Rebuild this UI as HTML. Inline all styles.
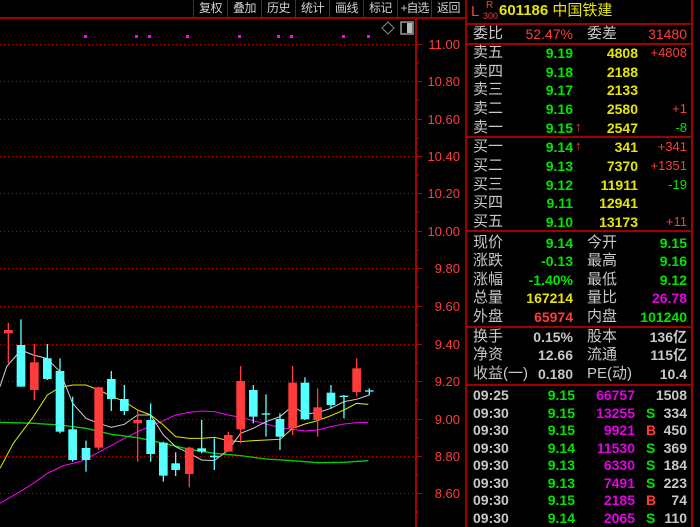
<!DOCTYPE html>
<html><head><meta charset="utf-8"><style>
*{margin:0;padding:0}
body{width:700px;height:527px;background:#000;overflow:hidden;position:relative;font-family:"Liberation Sans","Noto Sans CJK SC",sans-serif}
.t{position:absolute;white-space:nowrap;line-height:18px}
.l{color:#c8c8c8;font-size:15px}
.r{text-align:right;font-size:14px;font-weight:bold}
.g{color:#00e600}.y{color:#e6e600}.rd{color:#ff3b3b}.m{color:#e600e6}.w{color:#c8c8c8}
.tb{position:absolute;top:0;height:18px;border-left:1px solid #b00;color:#d0d0d0;font-size:12px;line-height:17px;text-align:center;width:33px;white-space:nowrap;overflow:hidden;letter-spacing:-0.5px}
.hl{position:absolute;height:2px;background:#a00000}
</style></head><body>
<svg width="700" height="527" style="position:absolute;left:0;top:0">
<rect x="0" y="17" width="466" height="2" fill="#a00000"/>
<rect x="415" y="18" width="2" height="509" fill="#a00000"/>
<rect x="465" y="0" width="2" height="527" fill="#a00000"/>
<rect x="691" y="0" width="2" height="527" fill="#a00000"/>
<g fill="#ff00ff"><rect x="84" y="35" width="3" height="3"/><rect x="135" y="35" width="3" height="3"/><rect x="148" y="35" width="3" height="3"/><rect x="186" y="35" width="3" height="3"/><rect x="238" y="35" width="3" height="3"/><rect x="277" y="35" width="3" height="3"/><rect x="290" y="35" width="3" height="3"/><rect x="342" y="35" width="3" height="3"/><rect x="367" y="35" width="3" height="3"/></g>
<path d="M388 22 l6 6 l-6 6 l-6 -6z" fill="none" stroke="#888" stroke-width="1"/>
<rect x="401" y="22" width="12" height="12" fill="none" stroke="#999" stroke-width="1.5"/><rect x="407" y="23" width="5" height="10" fill="#bbb"/>
<g stroke="#c00000" stroke-dasharray="1 3" stroke-width="1">
<line x1="0" y1="44.5" x2="413" y2="44.5"/><line x1="0" y1="81.5" x2="413" y2="81.5"/><line x1="0" y1="119.5" x2="413" y2="119.5"/><line x1="0" y1="156.5" x2="413" y2="156.5"/><line x1="0" y1="193.5" x2="413" y2="193.5"/><line x1="0" y1="231.5" x2="413" y2="231.5"/><line x1="0" y1="268.5" x2="413" y2="268.5"/><line x1="0" y1="306.5" x2="413" y2="306.5"/><line x1="0" y1="344.5" x2="413" y2="344.5"/><line x1="0" y1="381.5" x2="413" y2="381.5"/><line x1="0" y1="419.5" x2="413" y2="419.5"/><line x1="0" y1="456.5" x2="413" y2="456.5"/><line x1="0" y1="493.5" x2="413" y2="493.5"/>
</g>
<g stroke="#c00000" stroke-width="1">
<line x1="416" y1="44.5" x2="422" y2="44.5"/><line x1="416" y1="81.5" x2="422" y2="81.5"/><line x1="416" y1="119.5" x2="422" y2="119.5"/><line x1="416" y1="156.5" x2="422" y2="156.5"/><line x1="416" y1="193.5" x2="422" y2="193.5"/><line x1="416" y1="231.5" x2="422" y2="231.5"/><line x1="416" y1="268.5" x2="422" y2="268.5"/><line x1="416" y1="306.5" x2="422" y2="306.5"/><line x1="416" y1="344.5" x2="422" y2="344.5"/><line x1="416" y1="381.5" x2="422" y2="381.5"/><line x1="416" y1="419.5" x2="422" y2="419.5"/><line x1="416" y1="456.5" x2="422" y2="456.5"/><line x1="416" y1="493.5" x2="422" y2="493.5"/>
<line x1="416" y1="63" x2="419" y2="63"/><line x1="416" y1="100" x2="419" y2="100"/><line x1="416" y1="138" x2="419" y2="138"/><line x1="416" y1="175" x2="419" y2="175"/><line x1="416" y1="212" x2="419" y2="212"/><line x1="416" y1="250" x2="419" y2="250"/><line x1="416" y1="287" x2="419" y2="287"/><line x1="416" y1="325" x2="419" y2="325"/><line x1="416" y1="363" x2="419" y2="363"/><line x1="416" y1="400" x2="419" y2="400"/><line x1="416" y1="438" x2="419" y2="438"/><line x1="416" y1="475" x2="419" y2="475"/><line x1="416" y1="512" x2="419" y2="512"/>
</g>
<g fill="#ff3b3b" font-size="13" text-anchor="end" font-family="Liberation Sans">
<text x="460" y="49">11.00</text><text x="460" y="86">10.80</text><text x="460" y="124">10.60</text><text x="460" y="161">10.40</text><text x="460" y="198">10.20</text><text x="460" y="236">10.00</text><text x="460" y="273">9.80</text><text x="460" y="311">9.60</text><text x="460" y="349">9.40</text><text x="460" y="386">9.20</text><text x="460" y="424">9.00</text><text x="460" y="461">8.80</text><text x="460" y="498">8.60</text>
</g>
<g transform="translate(0,300) scale(0.3333)">
<g stroke-width="3" fill="none">
<polyline stroke="#ff00ff" points="0,610 60,575 100,550 142,520 190,497 240,485 300,455 373,415 413,395 452,378 490,362 527,345 568,337 605,333 643,335 685,345 722,352 760,362 798,372 840,383 878,388 915,393 953,390 993,380 1032,372 1070,368 1105,368"/>
<polyline stroke="#00d000" stroke-width="4" points="0,367 100,370 180,375 258,385 334,403 413,413 490,430 568,448 643,460 722,467 798,477 878,482 953,488 1032,487 1105,482"/>
<polyline stroke="#e6e600" points="0,505 40,430 100,350 142,285 180,262 218,255 258,255 296,270 334,288 373,305 413,330 452,345 490,375 527,410 568,415 605,415 643,412 685,422 722,425 760,422 798,420 840,418 878,385 915,372 953,362 993,347 1032,330 1070,310 1105,313"/>
<polyline stroke="#d0d0d0" points="0,260 20,200 63,150 100,165 140,175 180,215 218,310 258,355 296,370 334,382 373,373 413,345 452,345 490,405 527,440 568,460 605,480 643,482 685,450 722,400 760,385 798,365 840,350 878,318 915,342 953,338 993,325 1032,305 1070,298 1108,285"/>
</g>
<g id="c" stroke-width="4"></g>
</g>
</svg>
<script>
var d=[[25,68,190,90,100,1],[63,58,260,135,260,0],[103,132,300,187,270,1],[142,132,240,175,237,0],[180,175,400,213,395,0],[218,290,485,388,480,0],[258,422,515,444,480,0],[296,260,450,262,443,1],[334,213,333,237,297,0],[373,255,345,297,333,0],[413,330,485,360,370,1],[452,310,485,360,462,0],[490,425,545,428,527,0],[527,457,528,490,510,0],[568,440,562,443,522,1],[605,360,460,445,455,0],[643,415,510,467,472,0],[685,395,455,405,455,1],[722,198,430,243,388,1],[760,255,370,270,350,0],[798,283,410,340,344,0],[840,340,450,357,410,0],[878,198,405,248,385,1],[915,232,360,248,358,0],[953,265,410,322,360,1],[993,255,325,278,315,0],[1032,285,355,287,291,0],[1070,175,290,205,276,1],[1108,265,285,271,275,0]];
var s='';d.forEach(function(a){var c=a[5]?'#ff3b3b':'#55ffff';s+='<line x1="'+a[0]+'" y1="'+a[1]+'" x2="'+a[0]+'" y2="'+a[2]+'" stroke="'+c+'"/>';s+='<rect x="'+(a[0]-13)+'" y="'+a[3]+'" width="26" height="'+Math.max(4,a[4]-a[3])+'" fill="'+c+'"/>';});
document.getElementById('c').innerHTML=s;
</script>
<div class="tb" style="left:193px">复权</div><div class="tb" style="left:227px">叠加</div><div class="tb" style="left:261px">历史</div><div class="tb" style="left:295px">统计</div><div class="tb" style="left:329px">画线</div><div class="tb" style="left:363px">标记</div><div class="tb" style="left:397px;letter-spacing:-1px">+自选</div><div class="tb" style="left:431px">返回</div>
<div class="hl" style="left:466px;width:226px;top:23px"></div>
<div class="hl" style="left:466px;width:226px;top:43px"></div>
<div class="hl" style="left:466px;width:226px;top:136px"></div>
<div class="hl" style="left:466px;width:226px;top:230px"></div>
<div class="hl" style="left:466px;width:226px;top:326px"></div>
<div class="hl" style="left:466px;width:226px;top:384px"></div>
<div class="t rd" style="left:471px;top:3px;font-size:15px">L</div>
<div class="t rd" style="left:486px;top:-3px;font-size:10px">R</div>
<div class="t rd" style="left:483px;top:7px;font-size:9px">300</div>
<div class="t y" style="left:499px;top:2px;font-size:15px;font-weight:bold">601186 <span style="font-weight:normal">中国铁建</span></div>
<div class="t l" style="left:473px;top:25px">委比</div>
<div class="t r rd" style="left:500px;width:73px;top:25px;font-weight:normal">52.47%</div>
<div class="t l" style="left:587px;top:25px">委差</div>
<div class="t r rd" style="left:620px;width:67px;top:25px;font-weight:normal">31480</div>
<div id="ob"></div>
<script>
var rows=[['卖五','9.19','4808','+4808','rd',53],['卖四','9.18','2188','','',72],['卖三','9.17','2133','','',90],['卖二','9.16','2580','+1','rd',109],['卖一','9.15','2547','-8','g',128],['买一','9.14','341','+341','rd',147],['买二','9.13','7370','+1351','rd',166],['买三','9.12','11911','-19','g',185],['买四','9.11','12941','','',203],['买五','9.10','13173','+11','rd',222]];
var h='';rows.forEach(function(r,i){var t=r[5]-9;h+='<div class="t l" style="left:473px;top:'+t+'px">'+r[0]+'</div><div class="t r g" style="left:520px;width:53px;top:'+t+'px">'+r[1]+'</div><div class="t r y" style="left:590px;width:48px;top:'+t+'px">'+r[2]+'</div><div class="t r '+r[4]+'" style="left:640px;width:47px;top:'+t+'px;font-weight:normal;font-size:13px">'+r[3]+'</div>';if(i==4||i==5)h+='<div class="t rd" style="left:575px;top:'+(t-1)+'px;font-size:13px;font-weight:bold">↑</div>';});
var q=[['现价','9.14','g','今开','9.15','g',243],['涨跌','-0.13','g','最高','9.16','g',261],['涨幅','-1.40%','g','最低','9.12','g',280],['总量','167214','y','量比','26.78','m',298],['外盘','65974','rd','内盘','101240','g',317],['换手','0.15%','w','股本','136亿','w',337],['净资','12.66','w','流通','115亿','w',355],['收益(一)','0.180','w','PE(动)','10.4','w',374]];
q.forEach(function(r){var t=r[6]-9;h+='<div class="t l" style="left:473px;top:'+t+'px">'+r[0]+'</div><div class="t r '+r[2]+'" style="left:510px;width:63px;top:'+t+'px">'+r[1]+'</div><div class="t l" style="left:587px;top:'+t+'px">'+r[3]+'</div><div class="t r '+r[5]+'" style="left:620px;width:67px;top:'+t+'px">'+r[4]+'</div>';});
var k=[['09:25','9.15','66757','','','1508'],['09:30','9.15','13255','S','g','334'],['09:30','9.15','9921','B','rd','450'],['09:30','9.14','11530','S','g','369'],['09:30','9.13','6330','S','g','184'],['09:30','9.13','7491','S','g','223'],['09:30','9.15','2185','B','rd','74'],['09:30','9.14','2065','S','g','110']];
k.forEach(function(r,i){var t=386+i*17.5;h+='<div class="t r w" style="left:473px;top:'+t+'px;text-align:left">'+r[0]+'</div><div class="t r g" style="left:520px;width:55px;top:'+t+'px">'+r[1]+'</div><div class="t r m" style="left:580px;width:55px;top:'+t+'px">'+r[2]+'</div><div class="t r '+r[4]+'" style="left:646px;top:'+t+'px">'+r[3]+'</div><div class="t r w" style="left:650px;width:37px;top:'+t+'px">'+r[5]+'</div>';});
document.getElementById('ob').innerHTML=h;
</script>
</body></html>
